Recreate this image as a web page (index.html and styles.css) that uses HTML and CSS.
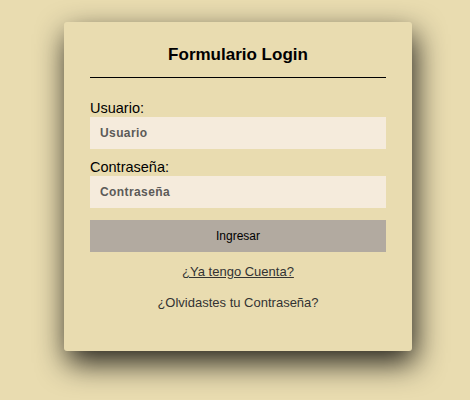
FILE: index.html
```html
<!DOCTYPE html>
<html lang="es">
<head>
<meta charset="utf-8">
<title>Formulario Login</title>
<link rel="stylesheet" href="styles.css">
</head>
<body>
<div class="page">
  <form class="card">
    <h2 class="title">Formulario Login</h2>
    <label class="label" for="u">Usuario:</label>
    <input class="field" id="u" type="text" placeholder="Usuario">
    <label class="label label-2" for="p">Contraseña:</label>
    <input class="field" id="p" type="password" placeholder="Contraseña">
    <button class="btn" type="button">Ingresar</button>
    <a class="link" href="#">¿Ya tengo Cuenta?</a>
    <p class="forgot">¿Olvidastes tu Contraseña?</p>
  </form>
</div>
</body>
</html>
```
FILE: styles.css
```css
html {
  background: #e9dcb0;
}
body {
  margin: 0;
  padding: 0;
  min-height: 100vh;
  font-family: "Liberation Sans", Arial, sans-serif;
}
.page {
  padding: 22px 0 0 64px;
}
.card {
  width: 296px;
  padding: 23px 26px 40px 26px;
  background: #e9dcb0;
  border-radius: 3px;
  box-shadow: 3px 12px 30px rgba(0, 0, 0, 0.85);
  display: flex;
  flex-direction: column;
}
.title {
  margin: 0;
  font-size: 17px;
  line-height: 20px;
  font-weight: bold;
  text-align: center;
  color: #000;
  padding-bottom: 12px;
  border-bottom: 1px solid #000;
}
.label {
  margin-top: 22px;
  font-size: 14.5px;
  line-height: 16px;
  color: #000;
}
.label-2 {
  margin-top: 10px;
}
.field {
  margin-top: 1px;
  height: 32px;
  box-sizing: border-box;
  border: none;
  outline: none;
  background: #f5ebdc;
  padding: 0 10px;
  font-family: "Liberation Sans", Arial, sans-serif;
  font-size: 12px;
  font-weight: bold;
  letter-spacing: 0.4px;
  color: #555;
}
.field::placeholder {
  color: #5c5a58;
  opacity: 1;
}
.btn {
  margin-top: 12px;
  height: 32px;
  border: none;
  background: #b2aaa0;
  font-family: "Liberation Sans", Arial, sans-serif;
  font-size: 12px;
  color: #000;
  padding: 0;
}
.link {
  margin-top: 12px;
  align-self: center;
  font-size: 13px;
  line-height: 16px;
  color: #333;
  text-decoration: underline;
}
.forgot {
  margin: 15px 0 0 0;
  font-size: 13px;
  line-height: 16px;
  text-align: center;
  color: #333;
}
```
